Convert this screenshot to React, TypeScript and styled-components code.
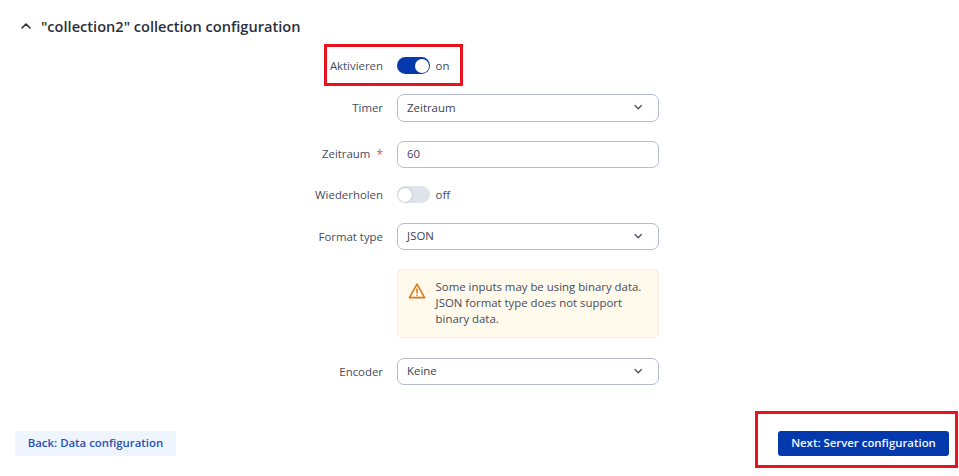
import React from "react";
import styled, { createGlobalStyle } from "styled-components";

const Global = createGlobalStyle`
  html, body { margin: 0; padding: 0; background: #fff; }
  body { font-family: "Open Sans", "Noto Sans", sans-serif; color: #3c4353; }
`;

const Page = styled.div`
  position: relative;
  width: 959px;
  height: 476px;
  overflow: hidden;
  box-sizing: border-box;
  padding: 15px 10px 0 15px;
  display: flex;
  flex-direction: column;
`;

const Header = styled.div`
  display: flex;
  align-items: center;
  gap: 9px;
  height: 22px;
  padding-left: 5px;
`;

const Title = styled.h2`
  margin: 0;
  font-size: 14.6px;
  font-weight: 600;
  color: #2b303b;
  line-height: 22px;
`;

const Form = styled.div`
  display: flex;
  flex-direction: column;
  margin: 15px 0 0 107px;
  width: 537px;
`;

const Row = styled.div<{ $after?: number; $height?: number }>`
  display: grid;
  grid-template-columns: 261px 262px;
  column-gap: 13.6px;
  align-items: center;
  height: ${(p) => p.$height ?? 27.5}px;
  margin-bottom: ${(p) => p.$after ?? 0}px;
`;

const Label = styled.div`
  font-size: 11.4px;
  color: #444b5c;
  display: flex;
  justify-content: flex-end;
  gap: 6px;
  padding-bottom: 0.5px;
`;

const Required = styled.span`
  color: #d9534f;
  font-size: 12px;
`;

const SwitchRow = styled.div`
  display: flex;
  align-items: center;
  gap: 6px;
  font-size: 11.4px;
  color: #444b5c;
`;

const Track = styled.div<{ $on: boolean }>`
  width: 33px;
  height: 17px;
  border-radius: 9px;
  background: ${(p) => (p.$on ? "#0339ad" : "#dfe3ea")};
  display: flex;
  align-items: center;
  justify-content: ${(p) => (p.$on ? "flex-end" : "flex-start")};
  padding: 0 1px;
  box-sizing: border-box;
`;

const Knob = styled.div`
  width: 14px;
  height: 14px;
  border-radius: 50%;
  background: #fff;
  box-shadow: 0 0 2px rgba(60, 70, 90, 0.35);
`;

const Field = styled.div`
  box-sizing: border-box;
  height: 27.5px;
  width: 262px;
  border: 1.5px solid #b4bccd;
  border-radius: 7px;
  padding: 0 14px 1px 9.5px;
  display: flex;
  align-items: center;
  justify-content: space-between;
  font-size: 11.4px;
  color: #3c4353;
  background: #fff;
`;

const Alert = styled.div`
  box-sizing: border-box;
  width: 262px;
  height: 69px;
  background: #fffaeb;
  border: 1px solid #fcecd8;
  border-radius: 5px;
  padding: 9.5px 10px 0 10.5px;
  display: flex;
  gap: 9.5px;
  font-size: 11.4px;
  line-height: 16.2px;
  color: #444b5c;
`;

const AlertIcon = styled.svg`
  flex: none;
  width: 18px;
  height: 18px;
  margin-top: 3px;
`;

const Footer = styled.div`
  display: flex;
  justify-content: space-between;
  margin-top: 45.5px;
`;

const Button = styled.button<{ $primary?: boolean }>`
  height: 25.5px;
  border: 0;
  border-radius: 3px;
  padding: 0 0 1px;
  font-family: inherit;
  font-size: 11.4px;
  font-weight: 600;
  background: ${(p) => (p.$primary ? "#0339ad" : "#eff5fe")};
  color: ${(p) => (p.$primary ? "#f4f7fd" : "#1f50b8")};
  width: ${(p) => (p.$primary ? 171 : 161)}px;
`;

const Annotation = styled.div<{ $x: number; $y: number; $w: number; $h: number }>`
  position: absolute;
  box-sizing: border-box;
  left: ${(p) => p.$x}px;
  top: ${(p) => p.$y}px;
  width: ${(p) => p.$w}px;
  height: ${(p) => p.$h}px;
  border: 3px solid #e8131c;
`;

const Chevron = ({ up, size = 12 }: { up?: boolean; size?: number }) => (
  <svg width={size} height={size} viewBox="0 0 12 12" fill="none" stroke={up ? "#2b303b" : "#4a5263"} strokeWidth={up ? 1.6 : 1.3} strokeLinecap="round" strokeLinejoin="round">
    <path d={up ? "M2 8 L6 4 L10 8" : "M3 4.5 L6.2 7.7 L9.4 4.5"} />
  </svg>
);

const Select = ({ value }: { value: string }) => (
  <Field>
    {value}
    <Chevron />
  </Field>
);

export default function App() {
  return (
    <Page>
      <Global />
      <Header>
        <Chevron up />
        <Title>"collection2" collection configuration</Title>
      </Header>
      <Form>
        <Row $after={14.5}>
          <Label>Aktivieren</Label>
          <SwitchRow>
            <Track $on><Knob /></Track>
            on
          </SwitchRow>
        </Row>
        <Row $after={19}>
          <Label>Timer</Label>
          <Select value="Zeitraum" />
        </Row>
        <Row $after={13}>
          <Label>Zeitraum <Required>*</Required></Label>
          <Field>60</Field>
        </Row>
        <Row $after={14}>
          <Label>Wiederholen</Label>
          <SwitchRow>
            <Track $on={false}><Knob /></Track>
            off
          </SwitchRow>
        </Row>
        <Row $after={18.5}>
          <Label>Format type</Label>
          <Select value="JSON" />
        </Row>
        <Row $after={20} $height={69}>
          <span />
          <Alert>
            <AlertIcon viewBox="0 0 18 18" fill="none" stroke="#dd7a1c" strokeWidth="1.6" strokeLinejoin="round" strokeLinecap="round">
              <path d="M9 2.2 L16.6 15.6 H1.4 Z" />
              <path d="M9 7 V11" />
              <path d="M9 13.2 V13.4" />
            </AlertIcon>
            <div>
              Some inputs may be using binary data.
              <br />
              JSON format type does not support
              <br />
              binary data.
            </div>
          </Alert>
        </Row>
        <Row>
          <Label>Encoder</Label>
          <Select value="Keine" />
        </Row>
      </Form>
      <Footer>
        <Button>Back: Data configuration</Button>
        <Button $primary>Next: Server configuration</Button>
      </Footer>
      <Annotation $x={323.5} $y={44} $w={139} $h={42} />
      <Annotation $x={754.5} $y={410.5} $w={203} $h={57} />
    </Page>
  );
}
